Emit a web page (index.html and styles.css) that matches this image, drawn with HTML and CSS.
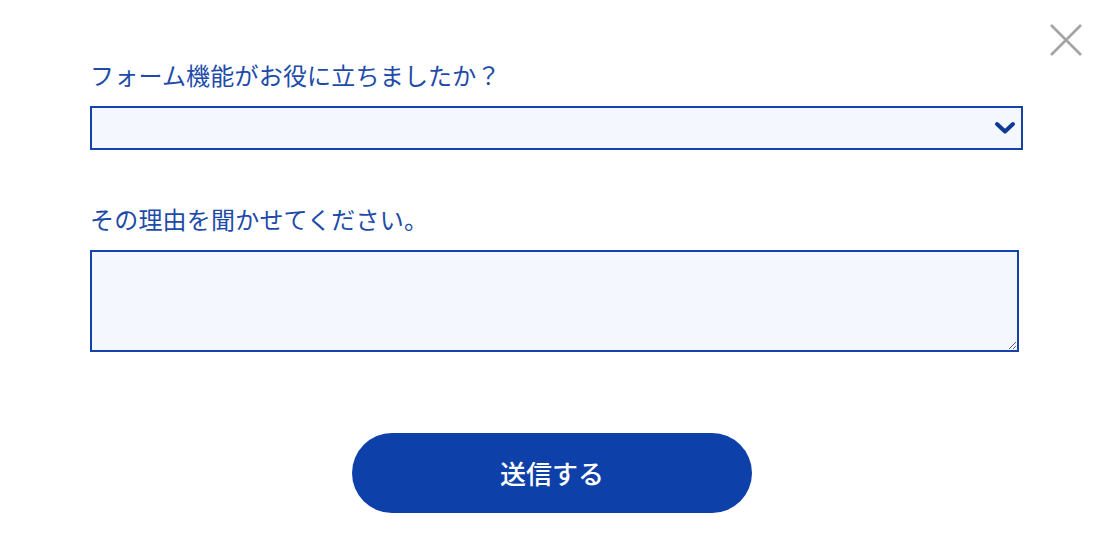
FILE: index.html
```html
<!DOCTYPE html>
<html>
  <head>
    <title>
      Feedback
    </title>
    <link rel="stylesheet" href="styles.css">
  </head>
  <body>
    <div class="modal">
      <button type="button" class="close-btn" aria-label="閉じる">
        <svg width="36" height="36" viewBox="0 0 36 36">
          <path d="M3 3 L33 33 M33 3 L3 33" stroke="#a3a3a3" stroke-width="2.6" fill="none"/>
        </svg>
      </button>
      <form id="feedbackForm">
        <div class="form-group">
          <label for="helpful">フォーム機能がお役に立ちましたか？</label>
          <div class="select-wrap">
            <select id="helpful" name="helpful">
              <option value=""></option>
              <option value="yes">はい</option>
              <option value="no">いいえ</option>
            </select>
            <svg class="chevron" width="22" height="14" viewBox="0 0 22 14">
              <path d="M3 3 L11 10.5 L19 3" stroke="#0d3a95" stroke-width="4" fill="none" stroke-linecap="round" stroke-linejoin="round"/>
            </svg>
          </div>
        </div>
        <div class="form-group reason">
          <label for="reason">その理由を聞かせてください。</label>
          <textarea id="reason" name="reason"></textarea>
        </div>
        <div class="actions">
          <button type="submit" class="submit-btn">送信する</button>
        </div>
      </form>
    </div>
  </body>
</html>
```

FILE: styles.css
```css
body {
  margin: 0;
  background: #fff;
  font-family: "Noto Sans CJK JP", "Noto Sans", sans-serif;
}

.modal {
  position: relative;
  width: 1108px;
  height: 539px;
  padding: 57px 0 0 90px;
  box-sizing: border-box;
}

.close-btn {
  position: absolute;
  top: 22px;
  right: 24px;
  padding: 0;
  border: none;
  background: none;
  cursor: pointer;
  line-height: 0;
}

label {
  display: block;
  color: #1d4ba9;
  font-size: 24px;
  letter-spacing: 0.2px;
  line-height: 36px;
  margin-bottom: 13px;
}

.reason {
  margin-top: 51px;
}

.select-wrap {
  position: relative;
  width: 933px;
}

select {
  display: block;
  width: 100%;
  height: 44px;
  border: 2px solid #1442a8;
  border-radius: 0;
  background: #f4f7fd;
  appearance: none;
  -webkit-appearance: none;
  font-size: 18px;
  padding: 0 40px 0 12px;
  color: #222;
}

.chevron {
  position: absolute;
  right: 7px;
  top: 15px;
  pointer-events: none;
}

textarea {
  display: block;
  width: 929px;
  height: 102px;
  box-sizing: border-box;
  border: 2px solid #1442a8;
  background: #f4f7fd;
  font-size: 18px;
  padding: 8px;
}

.actions {
  width: 924px;
  display: flex;
  justify-content: center;
  margin-top: 81px;
}

.submit-btn {
  width: 400px;
  height: 80px;
  border: none;
  border-radius: 40px;
  background-color: #0e40a9;
  color: #fff;
  font-family: "Noto Sans CJK JP", "Noto Sans", sans-serif;
  font-size: 26px;
  font-weight: 500;
  padding-bottom: 2px;
  cursor: pointer;
}
```
